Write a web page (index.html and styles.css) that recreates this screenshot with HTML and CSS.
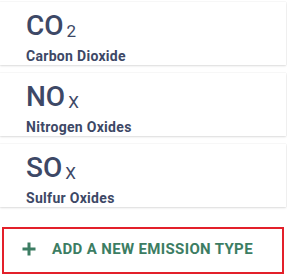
FILE: index.html
```html
<!DOCTYPE html>
<html lang="en">
<head>
	<meta charset="UTF-8">
	<meta name="viewport" content="width=device-width, initial-scale=1.0">
	<title>Emission Types</title>
	<link rel="stylesheet" href="styles.css">
</head>
<body>
	<div class="emission-list">
		<div class="emission-card">
			<div class="formula">CO<span class="sub">2</span></div>
			<div class="name">Carbon Dioxide</div>
		</div>
		<div class="emission-card">
			<div class="formula">NO<span class="sub">X</span></div>
			<div class="name">Nitrogen Oxides</div>
		</div>
		<div class="emission-card">
			<div class="formula">SO<span class="sub">X</span></div>
			<div class="name">Sulfur Oxides</div>
		</div>
	</div>

	<button class="add-button">
		<svg class="plus-icon" width="14" height="14" viewBox="0 0 14 14">
			<path d="M7 0.5V13.5M0.5 7H13.5" stroke="#3c7d63" stroke-width="3"/>
		</svg>
		<span class="add-label">ADD A NEW EMISSION TYPE</span>
	</button>
</body>
</html>
```

FILE: styles.css
```css
body {
	margin: 0;
	background: #fff;
	font-family: Roboto, "Liberation Sans", sans-serif;
}

.emission-list {
	display: flex;
	flex-direction: column;
	gap: 8px;
	padding: 2px 1px 0 0;
}

.emission-card {
	box-sizing: border-box;
	height: 63px;
	background: #fff;
	padding: 8px 26px 0;
	box-shadow: 0 1px 2px rgba(0, 0, 0, 0.12), 0 0 1px rgba(0, 0, 0, 0.14);
}

.formula {
	font-size: 28px;
	line-height: 32px;
	font-weight: 500;
	color: #3d4866;
}

.formula .sub {
	font-size: 17px;
	font-weight: 400;
	margin-left: 3px;
	position: relative;
	top: 2px;
}

.name {
	margin-top: 2px;
	font-size: 14px;
	line-height: 18px;
	font-weight: 700;
	letter-spacing: 0.3px;
	color: #3d4866;
}

.add-button {
	display: flex;
	align-items: flex-start;
	gap: 16px;
	box-sizing: border-box;
	width: 282px;
	height: 47px;
	margin: 20px 0 0 2px;
	padding: 11px 0 0 18px;
	background: #fff;
	border: 2px solid #e3202a;
	font-family: Roboto, "Liberation Sans", sans-serif;
	color: #3c7d63;
}

.plus-icon {
	margin-top: 2px;
}

.add-label {
	font-size: 15px;
	line-height: 18px;
	font-weight: 700;
	letter-spacing: 0.35px;
}
```
